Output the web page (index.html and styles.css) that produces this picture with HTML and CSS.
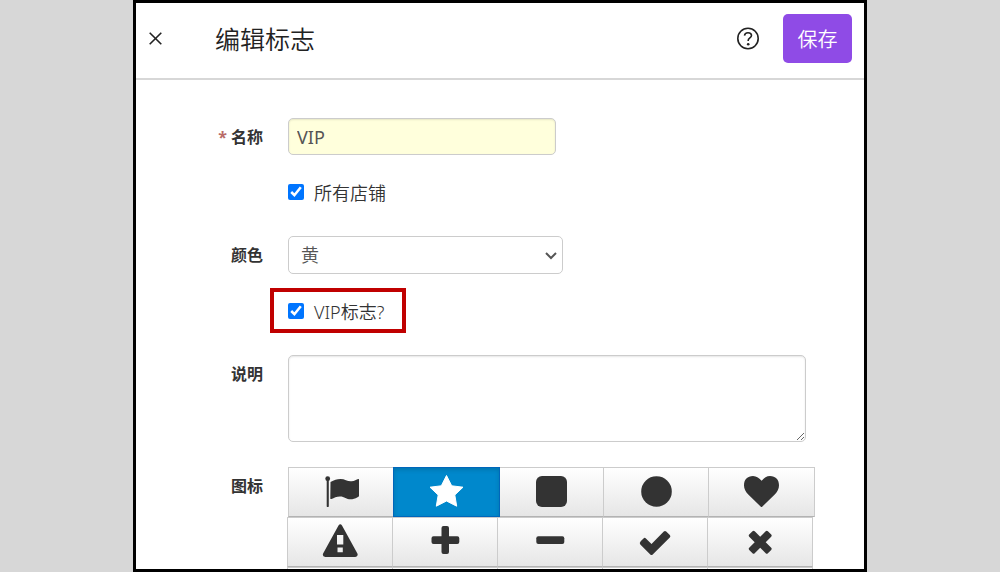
FILE: index.html
```html
<!DOCTYPE html>
<html lang="zh-CN">
<head>
    <meta charset="UTF-8">
    <meta name="viewport" content="width=device-width, initial-scale=1.0">
    <title>编辑标志</title>
    <link rel="stylesheet" href="styles.css">
</head>
<body>

<div class="window">
    <!-- Top bar -->
    <header class="header">
        <button class="close-button" type="button" aria-label="关闭">
            <svg width="13" height="13" viewBox="0 0 13 13"><path d="M.7 .7L12.300 12.300M12.300 .7L.7 12.300"/></svg>
        </button>
        <h1 class="title">编辑标志</h1>
        <button class="help-button" type="button" aria-label="帮助">
            <svg width="24" height="24" viewBox="0 0 24 24">
                <circle cx="12" cy="11.500" r="10.200"/>
                <path d="M8.500 8.700C8.700 6.700 10.200 5.700 12 5.700C14 5.700 15.500 6.800 15.500 8.500C15.500 10.800 12.200 10.900 12.200 13.300V14"/>
                <circle class="help-dot" cx="12.200" cy="17.200" r="1.300"/>
            </svg>
        </button>
        <button class="save-button" type="submit" form="flag-form">保存</button>
    </header>

    <form class="form" id="flag-form">
        <div class="row">
            <label class="label" for="name"><span class="required">*</span> 名称</label>
            <div class="field">
                <input class="text-input" id="name" type="text" value="VIP">
                <label class="check"><input type="checkbox" checked>所有店铺</label>
            </div>
        </div>

        <div class="row">
            <label class="label" for="color">颜色</label>
            <div class="field">
                <div class="select-box">
                    <select class="select" id="color">
                        <option>黄</option>
                    </select>
                    <svg class="select-arrow" width="12" height="8" viewBox="0 0 12 8"><path d="M1 1L6 6L11 1"/></svg>
                </div>
                <label class="check highlighted"><input type="checkbox" checked>VIP标志?</label>
            </div>
        </div>

        <div class="row">
            <label class="label" for="description">说明</label>
            <div class="field">
                <textarea class="textarea" id="description"></textarea>
            </div>
        </div>

        <div class="row">
            <span class="label" id="icon-label">图标</span>
            <div class="field" role="group" aria-labelledby="icon-label">
                <div class="icon-row first">
                    <button class="icon-button" type="button" aria-label="旗帜">
                        <svg viewBox="0 0 36 34"><circle cx="4.700" cy="4.700" r="2.400"/><path d="M3.700 5H5.800V32.500Q4.700 33.500 3.700 32.500ZM7.500 8C11 6 14 5 17.500 5C22 5 25 7.800 28.500 7.300C31.500 7 33.500 5.500 35.200 5C36 4.900 36 5.500 36 6V21.500C36 22.500 35.500 22.800 34.500 23.300C32 24.700 30 25.300 27.500 25.300C23.500 25.300 21.500 22.400 17 22.400C13.500 22.400 11 23.700 8.500 25C7.700 25.300 7.300 25 7.300 24.200Z"/></svg>
                    </button>
                    <button class="icon-button active" type="button" aria-label="星星">
                        <svg viewBox="0 0 36 34"><path d="M18.500 1.500L23.700 11.800L35 13.200L26.800 21L28.700 32.200L18.500 27L8.300 32.200L10.200 21L2 13.200L13.300 11.800Z" stroke="currentColor" stroke-width="1" stroke-linejoin="round"/></svg>
                    </button>
                    <button class="icon-button" type="button" aria-label="方形">
                        <svg viewBox="0 0 36 34"><rect x="3" y="2" width="31" height="31" rx="6"/></svg>
                    </button>
                    <button class="icon-button" type="button" aria-label="圆形">
                        <svg viewBox="0 0 36 34"><circle cx="18.500" cy="17.500" r="15.300"/></svg>
                    </button>
                    <button class="icon-button" type="button" aria-label="爱心">
                        <svg viewBox="0 0 36 34"><path d="M18.500 33Q18 33 17.600 32.500L5 20.300C2.500 17.800 1 14.500 1 11.200C1 5.500 4.500 2 10 2C13.500 2 16.500 4.500 18.500 6.800C20.500 4.500 23.500 2 27 2C32.500 2 36 5.500 36 11.200C36 14.500 34.500 17.800 32 20.300L19.400 32.500Q19 33 18.500 33Z"/></svg>
                    </button>
                </div>
                <div class="icon-row">
                    <button class="icon-button" type="button" aria-label="警告">
                        <svg viewBox="0 0 36 34"><path fill-rule="evenodd" d="M16.500 1.500Q18.300 -1 20 1.500L35.400 29.500Q36.500 32.500 33.300 33H3.200Q0 32.500 1.100 29.500ZM15 11V20.500H21.300V11ZM15.500 23.500V28.300H20.800V23.500Z"/></svg>
                    </button>
                    <button class="icon-button" type="button" aria-label="加号">
                        <svg viewBox="0 0 36 34"><path d="M16.500 2H20Q22 2 22 4V12.200H30.300Q32.300 12.200 32.300 14.200V18Q32.300 20 30.300 20H22V28Q22 30 20 30H16.500Q14.500 30 14.500 28V20H6.500Q4.500 20 4.500 18V14.200Q4.500 12.200 6.500 12.200H14.500V4Q14.500 2 16.500 2Z"/></svg>
                    </button>
                    <button class="icon-button" type="button" aria-label="减号">
                        <svg viewBox="0 0 36 34"><rect x="4.300" y="12.200" width="28" height="7.800" rx="2"/></svg>
                    </button>
                    <button class="icon-button" type="button" aria-label="对勾">
                        <svg viewBox="0 0 36 34"><path d="M3.700 17.200L6.500 14.400Q7.700 13.300 8.900 14.400L14.500 20L26.800 7.600Q28 6.500 29.200 7.600L32.800 11.100Q34 12.300 32.800 13.500L15.700 30.500Q14.500 31.500 13.300 30.500L3.300 20.500Q2 19 3.700 17.200Z"/></svg>
                    </button>
                    <button class="icon-button" type="button" aria-label="叉号">
                        <svg viewBox="0 0 36 34"><path d="M10.500 7.200Q11.600 6.200 12.700 7.200L18.200 12.700L23.700 7.200Q24.800 6.200 25.900 7.200L29.200 10.500Q30.200 11.600 29.200 12.700L23.700 18.200L29.200 23.700Q30.200 24.800 29.200 25.900L25.900 29.200Q24.800 30.200 23.700 29.200L18.200 23.700L12.700 29.200Q11.600 30.200 10.500 29.200L7.200 25.900Q6.200 24.800 7.200 23.700L12.700 18.200L7.200 12.700Q6.200 11.600 7.200 10.500Z"/></svg>
                    </button>
                </div>
                <div class="icon-row">
                    <button class="icon-button" type="button" aria-label="图标 11"></button>
                    <button class="icon-button" type="button" aria-label="图标 12"></button>
                    <button class="icon-button" type="button" aria-label="图标 13"></button>
                    <button class="icon-button" type="button" aria-label="图标 14"></button>
                    <button class="icon-button" type="button" aria-label="图标 15"></button>
                </div>
            </div>
        </div>
    </form>
</div>

</body>
</html>
```
FILE: styles.css
```css
* {
    box-sizing: border-box;
}

body {
    margin: 0;
    background-color: #d7d7d7;
    color: #333;
    font-family: "Noto Sans", "Noto Sans CJK SC", sans-serif;
    font-weight: 350;
}

button, input, select, textarea {
    font-family: inherit;
    font-weight: inherit;
}

button {
    cursor: pointer;
}

.window {
    max-width: 734px;
    height: 100vh;
    margin: 0 auto;
    border: 3px solid #000;
    background-color: #fff;
    overflow: hidden;
}

/* Top bar */
.header {
    display: flex;
    align-items: center;
    padding: 11px 12px 15px 13px;
    border-bottom: 2px solid #d7d7d7;
}

.close-button, .help-button {
    display: flex;
    padding: 0;
    border: none;
    background: none;
}

.close-button svg, .help-button svg {
    fill: none;
    stroke: #222;
    stroke-width: 1.6;
}

.help-button .help-dot {
    fill: #222;
    stroke: none;
}

.title {
    flex: 1;
    margin: 0 0 0 53px;
    color: #222;
    font-size: 25px;
    font-weight: inherit;
    line-height: 40px;
}

.save-button {
    width: 69px;
    height: 49px;
    margin-left: 23px;
    padding: 0;
    border: none;
    border-radius: 5px;
    background-color: #8f4be6;
    color: #fff;
    font-size: 20px;
}

/* Form rows */
.form {
    padding-top: 38px;
}

.row {
    display: grid;
    grid-template-columns: 127px 1fr;
    column-gap: 25px;
    margin-bottom: 22px;
}

.label {
    font-size: 16px;
    font-weight: 700;
    line-height: 38px;
    text-align: right;
}

.required {
    color: #b96b68;
}

.text-input, .select, .textarea {
    display: block;
    border: 1px solid #ccc;
    border-radius: 5px;
    background-color: #fff;
    color: #555;
    font-size: 18px;
}

.text-input {
    width: 268px;
    height: 37px;
    padding: 0 8px;
    background-color: #ffffdc;
    box-shadow: inset 0 1px 2px rgba(0, 0, 0, 0.1);
    font-weight: 400;
}

.select-box {
    position: relative;
    width: 275px;
}

.select {
    width: 100%;
    height: 38px;
    padding: 0 12px;
    appearance: none;
}

.select-arrow {
    position: absolute;
    top: 16px;
    right: 6px;
    fill: none;
    stroke: #555;
    stroke-width: 2;
    pointer-events: none;
}

.textarea {
    width: 90%;
    height: 87px;
    margin-bottom: 3px;
    box-shadow: inset 0 1px 2px rgba(0, 0, 0, 0.1);
}

.check {
    display: flex;
    align-items: center;
    gap: 10px;
    width: fit-content;
    height: 45px;
    margin: 14px 0 0 -18px;
    padding: 0 18px 0 14px;
    border: 4px solid transparent;
    font-size: 18px;
}

.check input {
    width: 16px;
    height: 16px;
    margin: 0;
    accent-color: #0075ff;
}

.check.highlighted {
    border-color: #c00000;
}

/* Icon picker */
.icon-row {
    display: flex;
    margin-left: -1px;
}

.icon-row.first {
    margin-left: 0;
}

.icon-button {
    display: flex;
    justify-content: center;
    width: 106px;
    height: 50px;
    margin-right: -1px;
    padding: 6px 0;
    border: 1px solid #ccc;
    border-bottom-color: #b3b3b3;
    background: linear-gradient(#fff, #e6e6e6);
    color: #333;
}

.first .icon-button {
    width: 107px;
    margin-right: -2px;
    padding-right: 2px;
}

.icon-button svg {
    width: 36px;
    height: 34px;
    fill: currentColor;
}

.icon-button.active {
    z-index: 1;
    border-color: #06b;
    background: #08c;
    box-shadow: inset 0 2px 4px rgba(0, 0, 0, 0.15);
    color: #fff;
}
```
